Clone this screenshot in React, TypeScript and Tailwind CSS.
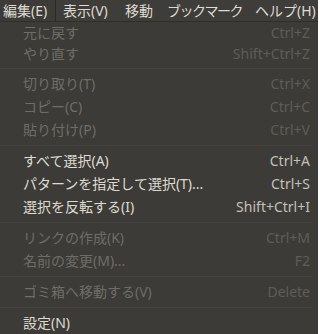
import React from 'react';

type Row =
  | { kind: 'item'; label: string; shortcut: string; enabled: boolean; h?: string }
  | { kind: 'sep' };

const rows: Row[] = [
  { kind: 'item', label: '元に戻す', shortcut: 'Ctrl+Z', enabled: false, h: 'h-[22px]' },
  { kind: 'item', label: 'やり直す', shortcut: 'Shift+Ctrl+Z', enabled: false, h: 'h-[20px]' },
  { kind: 'sep' },
  { kind: 'item', label: '切り取り(T)', shortcut: 'Ctrl+X', enabled: false },
  { kind: 'item', label: 'コピー(C)', shortcut: 'Ctrl+C', enabled: false },
  { kind: 'item', label: '貼り付け(P)', shortcut: 'Ctrl+V', enabled: false },
  { kind: 'sep' },
  { kind: 'item', label: 'すべて選択(A)', shortcut: 'Ctrl+A', enabled: true },
  { kind: 'item', label: 'パターンを指定して選択(T)...', shortcut: 'Ctrl+S', enabled: true },
  { kind: 'item', label: '選択を反転する(I)', shortcut: 'Shift+Ctrl+I', enabled: true },
  { kind: 'sep' },
  { kind: 'item', label: 'リンクの作成(K)', shortcut: 'Ctrl+M', enabled: false },
  { kind: 'item', label: '名前の変更(M)...', shortcut: 'F2', enabled: false },
  { kind: 'sep' },
  { kind: 'item', label: 'ゴミ箱へ移動する(V)', shortcut: 'Delete', enabled: false },
  { kind: 'sep' },
  { kind: 'item', label: '設定(N)', shortcut: '', enabled: true },
];

// fixed widths so each title starts where the reference has it
const menus = [
  { label: '表示(V)', w: 'w-[62px]' },
  { label: '移動', w: 'w-[42px]' },
  { label: 'ブックマーク', w: 'w-[88px] tracking-[-1.5px]' },
  { label: 'ヘルプ(H)', w: 'w-auto' },
];

export default function App() {
  return (
    <div
      className="w-[318px] h-[334px] overflow-hidden bg-[#3c3b37] text-[14px] leading-none"
      style={{ fontFamily: '"Noto Sans", "Noto Sans CJK JP", sans-serif' }}
    >
      {/* menubar */}
      <div className="flex h-[22px] items-center bg-[#3e3d39] border-b border-[#2f2e2b] text-[#dfdbd2] whitespace-nowrap">
        <div className="flex h-full items-center pl-[3px] pr-[6px] w-[56px] bg-[#3c3b37] border-r border-[#2b2a27]">
          編集(E)
        </div>
        <div className="flex pl-[7px]">
          {menus.map(m => (
            <span key={m.label} className={`shrink-0 ${m.w}`}>{m.label}</span>
          ))}
        </div>
      </div>

      {/* dropdown */}
      <div className="flex flex-col">
        {rows.map((r, i) =>
          r.kind === 'sep' ? (
            <div key={i} className="h-[8px] flex items-center pr-[5px]">
              <div className="w-full h-px bg-[#33322f] border-b border-[#43423e]" />
            </div>
          ) : (
            <div
              key={i}
              className={`flex items-center justify-between pl-[23px] pr-[8px] whitespace-nowrap ${r.h ?? 'h-[23px]'}`}
            >
              <span className={r.enabled ? 'text-[#dfdbd2]' : 'text-[#6f6d67]'}>{r.label}</span>
              <span className={r.enabled ? 'text-[#c4c1ba]' : 'text-[#5f5d58]'}>{r.shortcut}</span>
            </div>
          )
        )}
      </div>
    </div>
  );
}
